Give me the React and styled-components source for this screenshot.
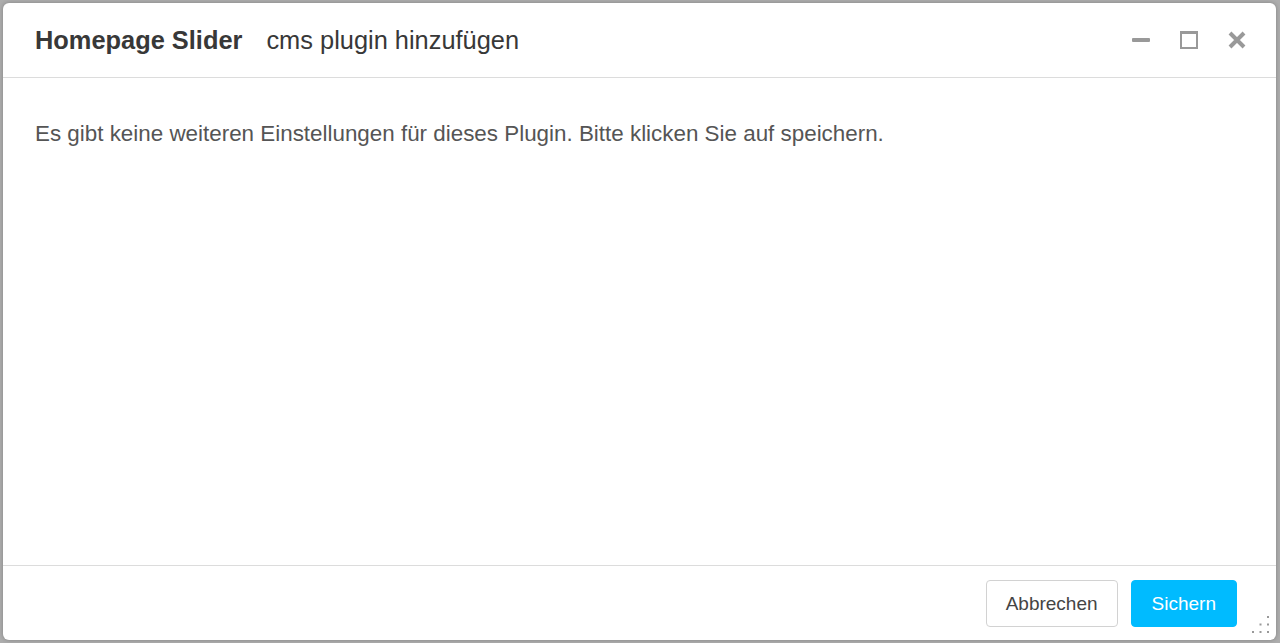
import React from 'react'
import styled, { createGlobalStyle } from 'styled-components'

const GlobalStyle = createGlobalStyle`
  html, body {
    margin: 0;
    padding: 0;
    height: 100%;
    background: #adadad;
    font-family: "Liberation Sans", Arial, sans-serif;
  }
  #root { height: 100%; }
`

const Backdrop = styled.div`
  box-sizing: border-box;
  height: 100vh;
  padding: 3px 4px 3px 3px;
  display: flex;
`

const Dialog = styled.div`
  flex: 1;
  display: flex;
  flex-direction: column;
  background: #fff;
  border-radius: 6px;
  box-shadow: 0 0 4px rgba(0, 0, 0, 0.25);
  position: relative;
  overflow: hidden;
`

const Header = styled.div`
  height: 74px;
  display: flex;
  align-items: center;
  padding: 0 30px 0 32px;
  border-bottom: 1px solid #dcdcdc;
  color: #333;
`

const Title = styled.h1`
  margin: 0;
  font-size: 25.4px;
  font-weight: 700;
  color: #383838;
`

const Subtitle = styled.span`
  margin-left: 24px;
  font-size: 25.4px;
  color: #383838;
  flex: 1;
`

const Controls = styled.div`
  display: flex;
  align-items: center;
  gap: 30px;
`

const IconButton = styled.button`
  width: 18px;
  height: 18px;
  padding: 0;
  border: 0;
  background: none;
  cursor: pointer;
  display: flex;
  align-items: center;
  justify-content: center;
  svg { display: block; }
`

const Body = styled.div`
  flex: 1;
  padding: 43px 32px;
  font-size: 22.4px;
  line-height: 25px;
  color: #555;
`

const Footer = styled.div`
  height: 75px;
  box-sizing: border-box;
  border-top: 1px solid #dcdcdc;
  display: flex;
  justify-content: flex-end;
  align-items: flex-start;
  gap: 13px;
  padding: 14px 39px 0 0;
`

const Button = styled.button`
  height: 47px;
  box-sizing: border-box;
  padding: 0 ${p => (p.$primary ? '20px' : '19px')};
  border-radius: 4px;
  font-family: inherit;
  font-size: 19px;
  cursor: pointer;
  border: 1px solid ${p => (p.$primary ? '#00bbff' : '#d2d2d2')};
  background: ${p => (p.$primary ? '#00bbff' : '#fff')};
  color: ${p => (p.$primary ? '#fff' : '#444')};
`

const Grip = styled.svg`
  position: absolute;
  right: 7px;
  bottom: 7px;
`

const gripDots = [[15, 0], [7.5, 7.5], [15, 7.5], [0, 15], [7.5, 15], [15, 15]]

const App = () => {
  return (
    <Backdrop>
      <GlobalStyle />
      <Dialog>
        <Header>
          <Title>Homepage Slider</Title>
          <Subtitle>cms plugin hinzufügen</Subtitle>
          <Controls>
            <IconButton title="minimieren">
              <svg width="18" height="18" viewBox="0 0 18 18">
                <rect x="0" y="7" width="18" height="4" rx="1" fill="#999" />
              </svg>
            </IconButton>
            <IconButton title="maximieren">
              <svg width="18" height="18" viewBox="0 0 18 18">
                <rect x="1" y="1.5" width="16" height="15.5" fill="none" stroke="#999" strokeWidth="2" />
                <rect x="0" y="0" width="18" height="3" fill="#999" />
              </svg>
            </IconButton>
            <IconButton title="schließen">
              <svg width="18" height="18" viewBox="0 0 18 18">
                <path d="M2 2 L16 16 M16 2 L2 16" stroke="#999" strokeWidth="4" strokeLinecap="butt" />
              </svg>
            </IconButton>
          </Controls>
        </Header>
        <Body>
          Es gibt keine weiteren Einstellungen für dieses Plugin. Bitte klicken Sie auf speichern.
        </Body>
        <Footer>
          <Button>Abbrechen</Button>
          <Button $primary>Sichern</Button>
        </Footer>
        <Grip width="17" height="17" viewBox="0 0 17 17">
          {gripDots.map(([x, y]) => (
            <rect key={`${x}-${y}`} x={x} y={y} width="2" height="2" fill="#999" />
          ))}
        </Grip>
      </Dialog>
    </Backdrop>
  )
}

export default App
